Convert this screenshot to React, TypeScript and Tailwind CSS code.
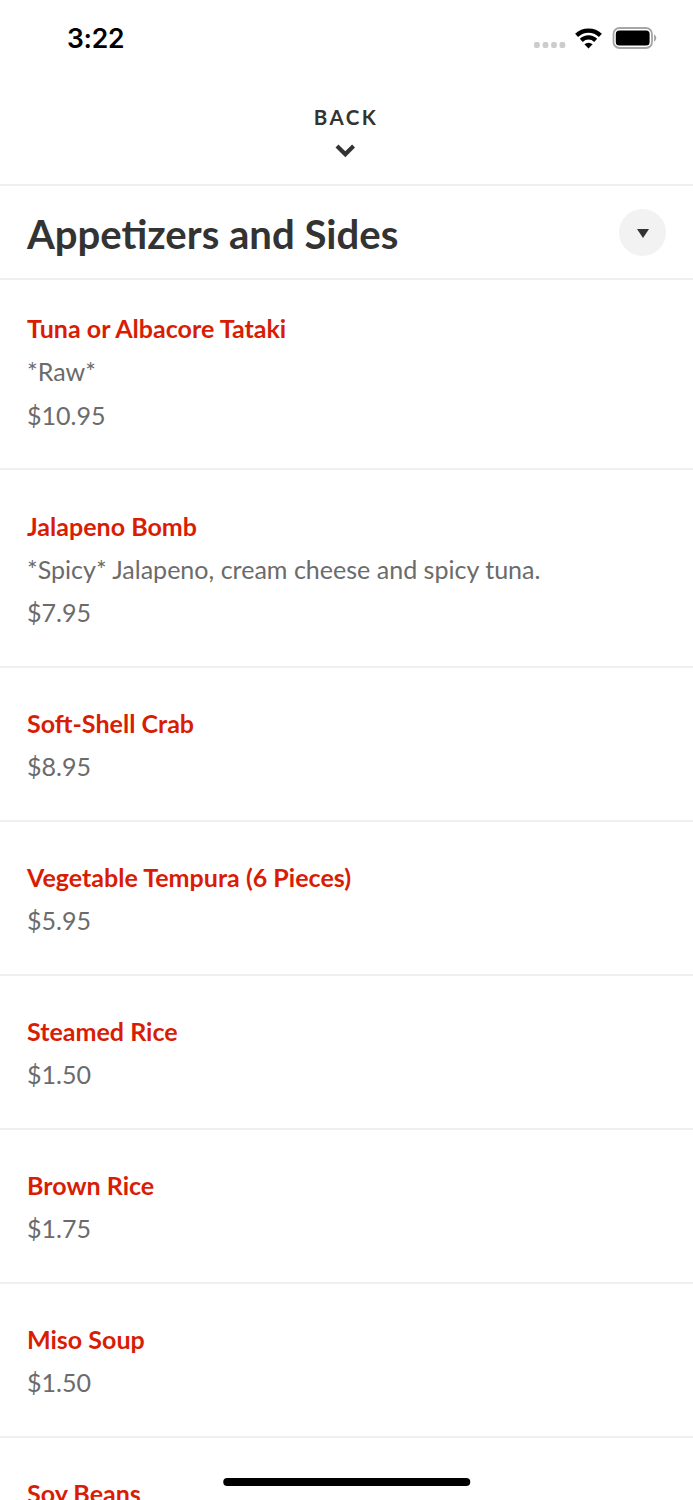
import React from 'react';

type MenuItem = {
  name: string;
  description?: string;
  price: string;
};

const items: MenuItem[] = [
  { name: "Tuna or Albacore Tataki", description: "*Raw*", price: "$10.95" },
  { name: "Jalapeno Bomb", description: "*Spicy* Jalapeno, cream cheese and spicy tuna.", price: "$7.95" },
  { name: "Soft-Shell Crab", price: "$8.95" },
  { name: "Vegetable Tempura (6 Pieces)", price: "$5.95" },
  { name: "Steamed Rice", price: "$1.50" },
  { name: "Brown Rice", price: "$1.75" },
  { name: "Miso Soup", price: "$1.50" }
];

const StatusBar = () => (
  <div className="flex h-[76px] shrink-0 items-center justify-between pl-[67px] pr-[36px] font-['Inter',sans-serif]">
    <span className="pt-px text-[26.5px] font-semibold leading-none tracking-[-0.3px] text-black">3:22</span>
    <div className="flex items-center">
      <svg className="mr-[9px] mt-[14px]" width="32" height="6" viewBox="0 0 32 6" fill="#cccccc">
        <rect x="0" width="5.8" height="6" rx="2" />
        <rect x="8.6" width="5.8" height="6" rx="2" />
        <rect x="17.1" width="5.8" height="6" rx="2" />
        <rect x="25.5" width="5.8" height="6" rx="2" />
      </svg>
      <svg className="mr-[10px]" width="27" height="21" viewBox="0 0 27 21" fill="none" stroke="#000" strokeWidth="4.3">
        <path d="M1.6 7.4a17 17 0 0 1 23.8 0" />
        <path d="M6.3 12.4a10.3 10.3 0 0 1 14.4 0" />
        <path d="M13.5 20.4l-4.1-4.1a6 6 0 0 1 8.2 0z" fill="#000" stroke="none" />
      </svg>
      <svg width="45" height="22" viewBox="0 0 45 22">
        <rect x="1.5" y="1" width="38.5" height="20" rx="6" fill="none" stroke="#a6a6a6" strokeWidth="1.8" />
        <rect x="3.8" y="3.6" width="33.8" height="14.8" rx="3.5" fill="#000" />
        <path d="M42 7.5v7c3-1.3 3-5.7 0-7z" fill="#a6a6a6" />
      </svg>
    </div>
  </div>
);

const MenuRow = ({ item }: { item: MenuItem }) => (
  <li className="border-b-2 border-[#f0f0f0] px-[27px] pb-[31.3px] pt-[34.2px] text-[25.06px] leading-[43.5px]">
    <h2 className="font-bold leading-[43px] text-[#d91d05]">{item.name}</h2>
    {item.description && <p className="text-[#6b6b6b]">{item.description}</p>}
    <p className="text-[#6b6b6b]">{item.price}</p>
  </li>
);

const App = () => {
  return (
    <div className="relative flex h-[1500px] w-full flex-col overflow-hidden bg-white font-['Lato',sans-serif]">
      <StatusBar />

      <button className="flex h-[110px] shrink-0 flex-col items-center border-b-2 border-[#f0f0f0] pr-[3px] pt-[28px]">
        <span className="pl-[2px] text-[20.5px] font-bold leading-[26px] tracking-[2.4px] text-[#333]">BACK</span>
        <svg className="mt-[14px]" width="20" height="14" viewBox="0 0 20 14" fill="none" stroke="#333" strokeWidth="4.2">
          <path d="M2 2l8.3 8.2L18.6 2" />
        </svg>
      </button>

      <header className="flex h-[94px] shrink-0 items-center justify-between border-b-2 border-[#f0f0f0] px-[27px]">
        <h1 className="pt-[5px] text-[40.1px] font-bold leading-none text-[#333]">Appetizers and Sides</h1>
        <button className="flex size-[47px] items-center justify-center rounded-full bg-[#f2f2f2] pt-[2px]">
          <svg width="12" height="9" viewBox="0 0 12 9" fill="#333">
            <path d="M0 0h12L6 9z" />
          </svg>
        </button>
      </header>

      <ul className="-mt-[7px]">
        {items.map((item, index) => (
          <MenuRow key={index} item={item} />
        ))}
        <li className="px-[27px] pt-[34.2px] text-[25.06px]">
          <h2 className="font-bold leading-[43px] text-[#d91d05]">Soy Beans</h2>
        </li>
      </ul>

      {/* Home indicator */}
      <div className="absolute bottom-[14px] left-1/2 h-[8px] w-[247.5px] -translate-x-1/2 rounded-full bg-black" />
    </div>
  );
};

export default App;
